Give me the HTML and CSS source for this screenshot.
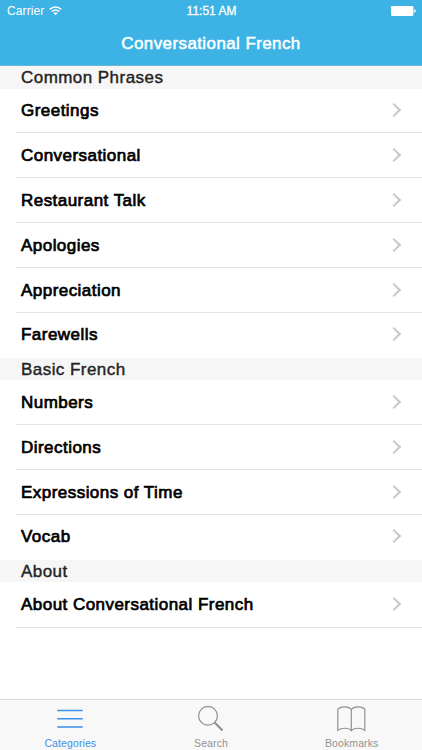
FILE: index.html
```html
<!DOCTYPE html>
<html lang="en">
<head>
    <meta charset="UTF-8">
    <meta name="viewport" content="width=device-width, initial-scale=1.0">
    <title>Conversational French</title>
    <link rel="stylesheet" href="styles.css">
</head>
<body>
    <header class="navbar">
        <div class="status">
            <div class="carrier">
                <span>Carrier</span>
                <svg class="wifi" width="13" height="10" viewBox="0 0 13 10">
                    <path d="M.8 3.4C4 .3 9 .3 12.2 3.4M2.8 5.6C5 3.6 8 3.6 10.2 5.6" fill="none" stroke="#fff" stroke-width="1.5"/>
                    <path d="M6.5 9.3L4.3 7.1C5.6 6 7.4 6 8.7 7.1Z" fill="#fff"/>
                </svg>
            </div>
            <span class="time">11:51 AM</span>
            <svg class="battery" width="25" height="10" viewBox="0 0 25 10">
                <rect width="22.4" height="10" rx="1.3" fill="#fff"/>
                <path d="M23.2 3.3Q24.8 3.6 24.8 5T23.2 6.7Z" fill="#fff"/>
            </svg>
        </div>
        <h1>Conversational French</h1>
    </header>

    <main class="list">
        <h2>Common Phrases</h2>
        <ul>
            <li><span>Greetings</span></li>
            <li><span>Conversational</span></li>
            <li><span>Restaurant Talk</span></li>
            <li><span>Apologies</span></li>
            <li><span>Appreciation</span></li>
            <li><span>Farewells</span></li>
        </ul>
        <h2>Basic French</h2>
        <ul>
            <li><span>Numbers</span></li>
            <li><span>Directions</span></li>
            <li><span>Expressions of Time</span></li>
            <li><span>Vocab</span></li>
        </ul>
        <h2>About</h2>
        <ul class="last">
            <li><span>About Conversational French</span></li>
        </ul>
    </main>

    <nav class="tabbar">
        <a class="tab active">
            <svg width="30" height="30" viewBox="0 0 30 30">
                <path d="M2.3 6.5H27.7M2.3 14.8H27.7M2.3 23H27.7" stroke-width="1.6"/>
            </svg>
            <span>Categories</span>
        </a>
        <a class="tab">
            <svg width="30" height="30" viewBox="0 0 30 30">
                <circle cx="12" cy="11.8" r="9.4" stroke-width="1.2"/>
                <path d="M18.7 18.6L26.5 26.5" stroke-width="2.2"/>
            </svg>
            <span>Search</span>
        </a>
        <a class="tab">
            <svg width="30" height="30" viewBox="0 0 30 30">
                <path d="M14.3 5.5C11.8 2.1 4.3 2.1 .8 5V26.4C4.3 23.5 11.8 23.5 14.3 26.7C16.8 23.5 24.3 23.5 27.8 26.4V5C24.3 2.1 16.8 2.1 14.3 5.5V26.7" stroke-width="1.2"/>
            </svg>
            <span>Bookmarks</span>
        </a>
    </nav>
</body>
</html>
```

FILE: styles.css
```css
* {
    box-sizing: border-box;
}

body {
    margin: 0;
    height: 750px;
    display: flex;
    flex-direction: column;
    background: #fff;
    font-family: "Liberation Sans", Arial, sans-serif;
    overflow: hidden;
}

/* Top bar */
.navbar {
    height: 66px;
    background: #3cb3e4;
    border-bottom: 1px solid #69b5d4;
    color: #fff;
}

.status {
    display: grid;
    grid-template-columns: 1fr auto 1fr;
    height: 22px;
    padding: 0 6px 0 7px;
    align-items: center;
    font-size: 12px;
}

.carrier {
    display: flex;
    align-items: center;
    gap: 5px;
    letter-spacing: 0.1px;
}

.battery {
    justify-self: end;
}

.time {
    -webkit-text-stroke: 0.3px;
}

h1 {
    margin: 0;
    line-height: 43px;
    text-align: center;
    font-size: 17px;
    font-weight: normal;
    letter-spacing: 0.4px;
    -webkit-text-stroke: 0.5px;
}

/* Phrase list */
.list {
    flex: 1;
}

h2 {
    margin: 0;
    height: 22.5px;
    padding-left: 21px;
    line-height: 24px;
    background: #f6f6f6;
    color: #222;
    font-size: 17px;
    font-weight: normal;
    letter-spacing: 0.45px;
    -webkit-text-stroke: 0.4px;
}

ul {
    list-style: none;
    margin: 0;
    padding: 0 0 0 16px;
}

li {
    display: flex;
    align-items: center;
    justify-content: space-between;
    height: 44.9px;
    padding: 1px 23px 0 5px;
    border-bottom: 1px solid #e4e4e6;
    color: #000;
    font-size: 17px;
    letter-spacing: 0.46px;
    -webkit-text-stroke: 0.7px;
}

li:last-child {
    border-bottom-color: transparent;
}

.last li:last-child {
    height: 45.5px;
    border-bottom-color: #e4e4e6;
}

li::after {
    content: "";
    box-sizing: border-box;
    width: 10px;
    height: 10px;
    margin-bottom: 2px;
    border: solid #c7c7cc;
    border-width: 2px 2px 0 0;
    transform: rotate(45deg);
}

/* Bottom tabs */
.tabbar {
    display: grid;
    grid-template-columns: repeat(3, 1fr);
    height: 51px;
    background: #f8f8f8;
    border-top: 1px solid #d8d8d8;
}

.tab {
    display: flex;
    flex-direction: column;
    align-items: center;
    padding-top: 4px;
    color: #929292;
    font-size: 10.5px;
    letter-spacing: 0.1px;
    line-height: 18px;
}

.tab svg {
    fill: none;
    stroke: currentColor;
}

.active {
    color: #3d8fe8;
}
```
